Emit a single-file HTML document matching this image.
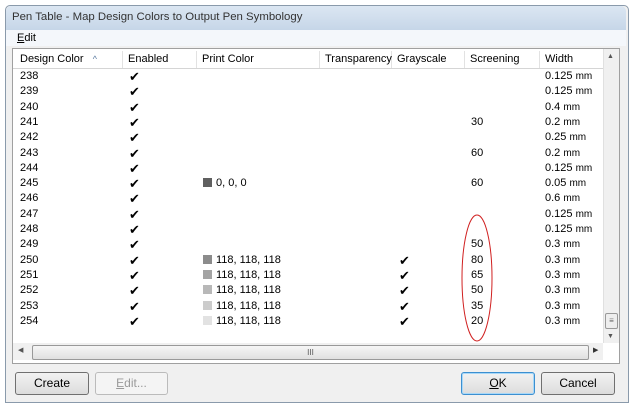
<html><head><style>
body{margin:0;width:634px;height:409px;background:#fff;font-family:"Liberation Sans",sans-serif;font-size:11px;color:#000;position:relative;overflow:hidden}
.a{position:absolute}
.r{position:absolute;height:15px;line-height:15px}
.sw{display:inline-block;width:9px;height:9px;margin-right:4px;vertical-align:-1px}
.btn{position:absolute;top:372px;height:21px;border:1px solid #707070;border-radius:3px;background:linear-gradient(#f2f2f2,#dcdcdc);text-align:center;line-height:21px;font-size:12px}
.hd{position:absolute;top:51px;height:17px;line-height:17px;border-right:1px solid #e2e2e2;padding-left:5px;font-size:11px;box-sizing:border-box}
</style></head><body>
<div class="a" style="left:5px;top:5px;width:622px;height:396px;border:1px solid #8a9aab;border-radius:5px 5px 0 0;background:#f0f0f0"></div>
<div class="a" style="left:6px;top:6px;width:620px;height:24px;background:linear-gradient(#dbe6f2,#c6d6e8);border-radius:5px 5px 0 0"></div>
<div class="a" style="left:12px;top:11px;font-size:11.4px;color:#333">Pen Table - Map Design Colors to Output Pen Symbology</div>
<div class="a" style="left:6px;top:30px;width:620px;height:16px;background:#f4f7fb"></div>
<div class="a" style="left:17px;top:32px;font-size:11px"><u>E</u>dit</div>
<div class="a" style="left:12px;top:48px;width:606px;height:314px;border:1px solid #a0a0a0;background:#fff"></div>
<div class="a" style="left:13px;top:49px;width:590px;height:19px;border-bottom:1px solid #d5d5d5;background:#fff"></div>
<div class="hd" style="left:15px;width:108px">Design Color &nbsp;&nbsp;<span style="color:#5a7aa0;font-size:9px">^</span></div>
<div class="hd" style="left:123px;width:74px">Enabled</div>
<div class="hd" style="left:197px;width:123px">Print Color</div>
<div class="hd" style="left:320px;width:72px">Transparency</div>
<div class="hd" style="left:392px;width:73px">Grayscale</div>
<div class="hd" style="left:465px;width:75px">Screening</div>
<div class="hd" style="left:540px;width:63px;border-right:none">Width</div>
<div class="a" style="left:603px;top:49px;width:15px;height:294px;background:#f0f0f0;border-left:1px solid #e0e0e0"></div>
<div class="a" style="left:607px;top:53px;font-size:7px;color:#555">▲</div>
<div class="a" style="left:605px;top:313px;width:11px;height:14px;border:1px solid #999;border-radius:2px;background:#eee;font-size:8px;line-height:13px;text-align:center;color:#666">≡</div>
<div class="a" style="left:607px;top:333px;font-size:7px;color:#555">▼</div>
<div class="a" style="left:13px;top:343px;width:590px;height:17px;background:#f0f0f0"></div>
<div class="a" style="left:32px;top:345px;width:555px;height:13px;border:1px solid #999;border-radius:2px;background:linear-gradient(#f6f6f6,#e0e0e0);text-align:center;font-size:8px;line-height:13px;color:#555">III</div>
<div class="a" style="left:18px;top:346px;font-size:7px;color:#555">◀</div>
<div class="a" style="left:593px;top:346px;font-size:7px;color:#333">▶</div>
<div id="rows"></div>
<svg class="a" style="left:0;top:0" width="634" height="409"><ellipse cx="477" cy="278" rx="15" ry="63" fill="none" stroke="#d02020" stroke-width="1"/></svg>
<div class="btn" style="left:15px;width:72px">Create</div>
<div class="btn" style="left:95px;width:71px;color:#999;border-color:#bbb;background:#f4f4f4"><u>E</u>dit...</div>
<div class="btn" style="left:461px;width:72px;border-color:#3c8fd0;box-shadow:inset 0 0 0 1px #a8d8f8"><u>O</u>K</div>
<div class="btn" style="left:541px;width:72px">Cancel</div>
<script>
var d=[[238,"","","","0.125"],[239,"","","","0.125"],[240,"","","","0.4"],[241,"","","30","0.2"],[242,"","","","0.25"],[243,"","","60","0.2"],[244,"","","","0.125"],[245,"#606060:0, 0, 0","","60","0.05"],[246,"","","","0.6"],[247,"","","","0.125"],[248,"","","","0.125"],[249,"","","50","0.3"],[250,"#8c8c8c:118, 118, 118","1","80","0.3"],[251,"#a4a4a4:118, 118, 118","1","65","0.3"],[252,"#b8b8b8:118, 118, 118","1","50","0.3"],[253,"#cccccc:118, 118, 118","1","35","0.3"],[254,"#e2e2e2:118, 118, 118","1","20","0.3"]];
var h="";d.forEach(function(r,i){var y=69+i*15.3;
h+='<div class="r" style="left:20px;top:'+y+'px">'+r[0]+'</div><div class="r" style="left:129px;top:'+y+'px;font-size:13px">✔</div>';
if(r[1]){var p=r[1].split(":");h+='<div class="r" style="left:203px;top:'+y+'px"><span class="sw" style="background:'+p[0]+'"></span>'+p[1]+'</div>';}
if(r[2])h+='<div class="r" style="left:399px;top:'+y+'px;font-size:13px">✔</div>';
if(r[3])h+='<div class="r" style="left:471px;top:'+y+'px">'+r[3]+'</div>';
h+='<div class="r" style="left:545px;top:'+y+'px">'+r[4]+' <span style="font-size:10px">mm</span></div>';});
document.getElementById("rows").innerHTML=h;
</script>
</body></html>
